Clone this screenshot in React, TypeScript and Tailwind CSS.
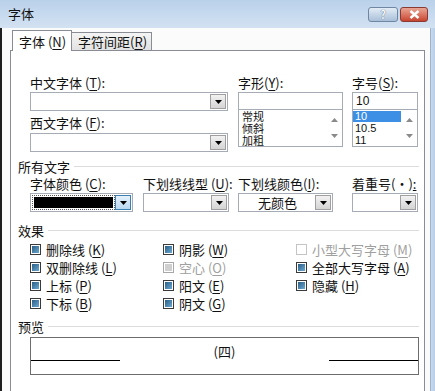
import React from "react";

const U = ({ k }: { k: string }) => (
  <span>
    (<span className="underline underline-offset-2">{k}</span>)
  </span>
);

const DropBtn = ({ active = false }: { active?: boolean }) => (
  <div
    className={
      "w-[16px] h-full flex items-center justify-center border " +
      (active
        ? "border-[#3c7fb1] bg-gradient-to-b from-[#e5f1fb] to-[#b9d8f2]"
        : "border-[#a0a0a0] bg-gradient-to-b from-[#f2f2f2] to-[#d4d4d4]")
    }
  >
    <svg width="7" height="4" viewBox="0 0 7 4">
      <path d="M0 0h7L3.5 4z" fill="#000" />
    </svg>
  </div>
);

const Combo = ({
  w,
  text,
  black = false,
  active = false,
}: {
  w: string;
  text?: string;
  black?: boolean;
  active?: boolean;
}) => (
  <div className={`${w} h-[19px] border border-[#a5acb5] bg-white flex p-[1px]`}>
    <div className="flex-1 flex items-center justify-center">
      {black ? (
        <div className="w-full h-full p-[1px] border border-dotted border-[#555]">
          <div className="w-full h-full bg-black" />
        </div>
      ) : (
        <span>{text}</span>
      )}
    </div>
    <DropBtn active={active} />
  </div>
);

const ScrollArrows = () => (
  <div className="w-[16px] flex flex-col justify-between items-center py-[8px]">
    <svg width="7" height="4" viewBox="0 0 7 4">
      <path d="M0 4h7L3.5 0z" fill="#8a8a8a" />
    </svg>
    <svg width="7" height="4" viewBox="0 0 7 4">
      <path d="M0 0h7L3.5 4z" fill="#8a8a8a" />
    </svg>
  </div>
);

const Group = ({ label }: { label: string }) => (
  <div className="flex items-center h-[16px] pl-[7px] pr-[5px]">
    <span className="leading-none">{label}</span>
    <div className="flex-1 h-px bg-[#dcdcdc] ml-[4px]" />
  </div>
);

const Check = ({
  label,
  k,
  state = "on",
}: {
  label: string;
  k: string;
  state?: "on" | "gray" | "off";
}) => (
  <div className="flex items-center h-[18px]">
    {state === "on" && (
      <div className="w-[11px] h-[11px] border border-[#3a3a3a] p-[1px] bg-white">
        <div className="w-full h-full bg-gradient-to-br from-[#2b5f86] to-[#6aa9d2]" />
      </div>
    )}
    {state === "gray" && (
      <div className="w-[11px] h-[11px] border border-[#a8a8a8] p-[1px] bg-white">
        <div className="w-full h-full bg-[#cfcfcf]" />
      </div>
    )}
    {state === "off" && (
      <div className="w-[11px] h-[11px] border border-[#c4c4c4] bg-white" />
    )}
    <span
      className={
        "ml-[5px] leading-none " + (state === "on" ? "text-[#111]" : "text-[#a0a0a0]")
      }
    >
      {label} <U k={k} />
    </span>
  </div>
);

export default function App() {
  return (
    <div className="w-[435px] h-[391px] overflow-hidden bg-[#c8daee] flex flex-col font-['Noto_Sans_CJK_SC','Noto_Sans',sans-serif] text-[13px] text-[#111]">
      {/* Title bar */}
      <div className="h-[28px] flex items-start justify-between bg-gradient-to-b from-[#bad1ea] to-[#d3e2f2]">
        <span className="ml-[8px] mt-[5px] leading-[18px]">字体</span>
        <div className="flex mt-[7px] mr-[7px] gap-[2px]">
          <div className="w-[30px] h-[15px] rounded-[3px] border border-[#6f87a2] bg-gradient-to-b from-[#e3ecf6] to-[#a9c0d9] flex items-center justify-center text-[11px] font-bold text-[#f4f7fb] [text-shadow:0_0_1px_#2d3f55] leading-none">
            ?
          </div>
          <div className="w-[28px] h-[15px] rounded-[3px] border border-[#8a3a30] bg-gradient-to-b from-[#e8a595] to-[#c7432f] flex items-center justify-center">
            <svg width="11" height="9" viewBox="0 0 11 9">
              <path d="M1.5 1L9.5 8M9.5 1L1.5 8" stroke="#fff" strokeWidth="2.4" />
            </svg>
          </div>
        </div>
      </div>

      {/* Window body */}
      <div className="flex-1 flex">
        <div className="w-[430px] border-l-[2px] border-[#1e1e1e] bg-[#fbfbfb] flex flex-col pl-[8px] pr-[5px]">
          {/* Tabs */}
          <div className="flex items-end h-[22px] pl-[2px]">
            <div className="w-[60px] h-[21px] border border-b-0 border-[#898c95] bg-white flex items-center pl-[6px] -mb-px z-10 relative">
              <span className="leading-none">
                字体 <U k="N" />
              </span>
            </div>
            <div className="w-[80px] h-[18px] border border-l-0 border-b-0 border-[#898c95] bg-gradient-to-b from-[#f4f4f4] to-[#e2e2e2] flex items-center pl-[6px]">
              <span className="leading-none">
                字符间距
                <U k="R" />
              </span>
            </div>
          </div>

          {/* Panel */}
          <div className="flex-1 border border-b-0 border-[#898c95] bg-white flex flex-col">
            {/* Section 1 */}
            <div className="flex pl-[19px] mt-[24px]">
              <div className="w-[198px] flex flex-col">
                <div className="h-[16px] leading-[16px]">
                  中文字体 <U k="T" />:
                </div>
                <div className="mt-[1px]">
                  <Combo w="w-[198px]" />
                </div>
                <div className="h-[16px] leading-[16px] mt-[4px]">
                  西文字体 <U k="F" />:
                </div>
                <div className="mt-[2px]">
                  <Combo w="w-[198px]" />
                </div>
              </div>
              <div className="w-[105px] ml-[10px] flex flex-col">
                <div className="h-[16px] leading-[16px]">
                  字形
                  <U k="Y" />:
                </div>
                <div className="mt-[1px] h-[18px] border border-[#a5acb5] bg-white" />
                <div className="h-[37px] border border-t-0 border-[#a5acb5] bg-white flex">
                  <div className="flex-1 flex flex-col pl-[3px] text-[11px] leading-[11px] pt-[1px]">
                    <span className="h-[11px]">常规</span>
                    <span className="h-[11px] mt-px">倾斜</span>
                    <span className="h-[11px] mt-px">加粗</span>
                  </div>
                  <ScrollArrows />
                </div>
              </div>
              <div className="w-[66px] ml-[9px] flex flex-col">
                <div className="h-[16px] leading-[16px]">
                  字号
                  <U k="S" />:
                </div>
                <div className="mt-[1px] h-[18px] border border-[#a5acb5] bg-white flex items-center pl-[3px] font-['Liberation_Sans',sans-serif] text-[12px]">
                  10
                </div>
                <div className="h-[37px] border border-t-0 border-[#a5acb5] bg-white flex">
                  <div className="flex-1 flex flex-col pt-[1px] font-['Liberation_Sans',sans-serif] text-[11px] leading-[11px]">
                    <span className="bg-[#3d8ee5] text-white pl-[2px] h-[11px]">10</span>
                    <span className="pl-[2px] h-[11px] mt-px">10.5</span>
                    <span className="pl-[2px] h-[11px] mt-px">11</span>
                  </div>
                  <ScrollArrows />
                </div>
              </div>
            </div>

            {/* 所有文字 */}
            <div className="mt-[6px]">
              <Group label="所有文字" />
            </div>
            <div className="flex pl-[19px] mt-[2px]">
              <div className="w-[103px] flex flex-col">
                <div className="h-[16px] leading-[16px] whitespace-nowrap">
                  字体颜色 <U k="C" />:
                </div>
                <div className="mt-[1px]">
                  <Combo w="w-[103px]" black active />
                </div>
              </div>
              <div className="w-[86px] ml-[10px] flex flex-col">
                <div className="h-[16px] leading-[16px] whitespace-nowrap">
                  下划线线型 <U k="U" />:
                </div>
                <div className="mt-[1px]">
                  <Combo w="w-[86px]" />
                </div>
              </div>
              <div className="w-[95px] ml-[9px] flex flex-col">
                <div className="h-[16px] leading-[16px] whitespace-nowrap">
                  下划线颜色
                  <U k="I" />:
                </div>
                <div className="mt-[1px]">
                  <Combo w="w-[95px]" text="无颜色" />
                </div>
              </div>
              <div className="w-[66px] ml-[19px] flex flex-col">
                <div className="h-[16px] leading-[16px] whitespace-nowrap">
                  着重号(·)<span className="underline">:</span>
                </div>
                <div className="mt-[1px]">
                  <Combo w="w-[66px]" />
                </div>
              </div>
            </div>

            {/* 效果 */}
            <div className="mt-[10px]">
              <Group label="效果" />
            </div>
            <div className="flex pl-[19px] mt-[2px]">
              <div className="w-[133px] flex flex-col">
                <Check label="删除线" k="K" />
                <Check label="双删除线" k="L" />
                <Check label="上标" k="P" />
                <Check label="下标" k="B" />
              </div>
              <div className="w-[133px] flex flex-col">
                <Check label="阴影" k="W" />
                <Check label="空心" k="O" state="gray" />
                <Check label="阳文" k="E" />
                <Check label="阴文" k="G" />
              </div>
              <div className="flex flex-col">
                <Check label="小型大写字母" k="M" state="off" />
                <Check label="全部大写字母" k="A" />
                <Check label="隐藏" k="H" />
              </div>
            </div>

            {/* 预览 */}
            <div className="mt-[6px]">
              <Group label="预览" />
            </div>
            <div className="ml-[19px] mr-[5px] mt-[3px] h-[38px] border border-[#6d6d6d] bg-white flex items-end pb-[13px]">
              <div className="w-[89px] h-px bg-black" />
              <div className="flex-1 flex justify-center self-center pt-[4px] leading-none">
                (四)
              </div>
              <div className="w-[89px] h-px bg-black" />
            </div>
          </div>
        </div>
        <div className="flex-1 border-l border-[#9fb3c8] bg-gradient-to-r from-[#c9dbee] to-[#b7cde6]" />
      </div>
    </div>
  );
}
